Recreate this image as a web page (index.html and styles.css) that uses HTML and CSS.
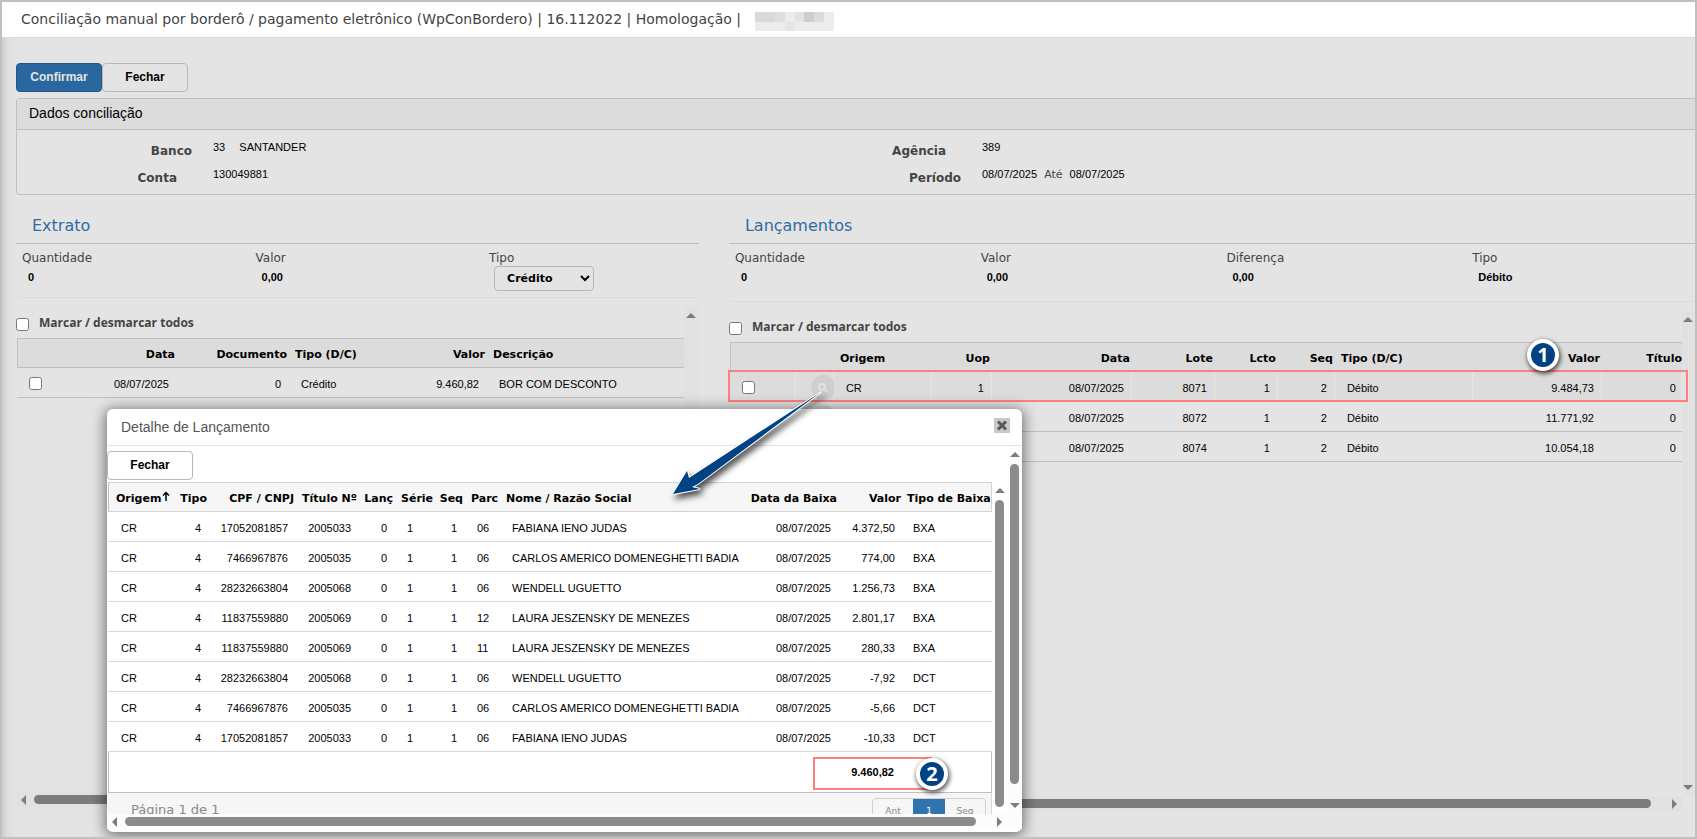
FILE: index.html
```html
<!DOCTYPE html>
<html lang="pt-BR">
<head>
  <meta charset="UTF-8">
  <meta name="viewport" content="width=device-width, initial-scale=1.0">
  <title>Conciliação manual por borderô</title>
  <link rel="stylesheet" href="styles.css">
</head>
<body>
  <header class="topbar">
    <h1>Conciliação manual por borderô / pagamento eletrônico (WpConBordero) | 16.112022 | Homologação |</h1>
    <svg class="redacted" viewBox="0 0 8 2" preserveAspectRatio="none" shape-rendering="crispEdges" aria-hidden="true">
      <rect width="8" height="2" fill="#ececec"/>
      <rect width="2" height="1" fill="#d9d9d9"/><rect x="2" width="1" height="1" fill="#dbe0e4"/>
      <rect x="4" width="1" height="1" fill="#e3e3e3"/><rect x="5" width="1" height="1" fill="#cdcdcd"/>
      <rect x="6" width="1" height="1" fill="#dadbe0"/><rect x="3" y="1" width="1" height="1" fill="#e5e5e5"/>
    </svg>
  </header>

  <main class="page">
    <div class="actions">
      <button class="btn btn-primary" type="button">Confirmar</button>
      <button class="btn" type="button">Fechar</button>
    </div>

    <section class="panel">
      <h2 class="panel-title">Dados conciliação</h2>
      <div class="panel-body">
        <span class="lbl">Banco</span>
        <span class="val">33 <span class="name">SANTANDER</span></span>
        <span class="lbl lbl-wide">Agência</span>
        <span class="val">389</span>
        <span class="lbl lbl-wide">Conta</span>
        <span class="val">130049881</span>
        <span class="lbl">Período</span>
        <span class="val">08/07/2025 <span class="ate">Até</span> 08/07/2025</span>
      </div>
    </section>

    <div class="columns">
      <section class="extrato">
        <h2 class="section-title">Extrato</h2>
        <div class="summary">
          <div><span class="sum-label">Quantidade</span><b>0</b></div>
          <div><span class="sum-label">Valor</span><b>0,00</b></div>
          <div>
            <label class="sum-label" for="tipo">Tipo</label>
            <select id="tipo"><option>Crédito</option><option>Débito</option></select>
          </div>
        </div>
        <div class="list">
          <div class="list-content">
            <div class="check-all">
              <input type="checkbox" id="todosExtrato">
              <label for="todosExtrato">Marcar / desmarcar todos</label>
            </div>
            <table class="grid">
              <colgroup><col class="w45"><col class="w115"><col class="w112"><col class="w90"><col class="w108"><col></colgroup>
              <thead>
                <tr><th></th><th class="r">Data</th><th class="r">Documento</th><th>Tipo (D/C)</th><th class="r">Valor</th><th>Descrição</th></tr>
              </thead>
              <tbody>
                <tr><td><input type="checkbox" aria-label="Selecionar"></td><td class="r">08/07/2025</td><td class="r">0</td><td>Crédito</td><td class="r">9.460,82</td><td>BOR COM DESCONTO</td></tr>
              </tbody>
            </table>
          </div>
          <div class="vbar"><i class="up"></i></div>
          <div class="hbar"><i class="left"></i><span class="thumb"></span><i class="right"></i></div>
        </div>
      </section>

      <section class="lancamentos">
        <h2 class="section-title">Lançamentos</h2>
        <div class="summary">
          <div><span class="sum-label">Quantidade</span><b>0</b></div>
          <div><span class="sum-label">Valor</span><b>0,00</b></div>
          <div><span class="sum-label">Diferença</span><b>0,00</b></div>
          <div><span class="sum-label">Tipo</span><b>Débito</b></div>
        </div>
        <div class="list">
          <div class="list-content">
            <div class="check-all">
              <input type="checkbox" id="todosLanc">
              <label for="todosLanc">Marcar / desmarcar todos</label>
            </div>
            <table class="grid">
              <colgroup><col class="w66"><col class="w38"><col class="w98"><col class="w60"><col class="w140"><col class="w83"><col class="w63"><col class="w57"><col class="w138"><col><col class="w80"></colgroup>
              <thead>
                <tr><th></th><th></th><th>Origem</th><th class="r">Uop</th><th class="r">Data</th><th class="r">Lote</th><th class="r">Lcto</th><th class="r">Seq</th><th>Tipo (D/C)</th><th class="r">Valor</th><th class="r">Título</th></tr>
              </thead>
              <tbody>
                <tr class="hover"><td><input type="checkbox" aria-label="Selecionar"></td><td><button class="lupa" type="button" aria-label="Detalhe"><svg viewBox="0 0 10 10"><circle cx="4" cy="4" r="3"/><path d="M6.2 6.2 9 9"/></svg></button></td><td>CR</td><td class="r">1</td><td class="r">08/07/2025</td><td class="r">8071</td><td class="r">1</td><td class="r">2</td><td>Débito</td><td class="r">9.484,73</td><td class="r">0</td></tr>
                <tr><td><input type="checkbox" aria-label="Selecionar"></td><td><button class="lupa" type="button" aria-label="Detalhe"></button></td><td>CR</td><td class="r">1</td><td class="r">08/07/2025</td><td class="r">8072</td><td class="r">1</td><td class="r">2</td><td>Débito</td><td class="r">11.771,92</td><td class="r">0</td></tr>
                <tr><td><input type="checkbox" aria-label="Selecionar"></td><td><button class="lupa" type="button" aria-label="Detalhe"></button></td><td>CR</td><td class="r">1</td><td class="r">08/07/2025</td><td class="r">8074</td><td class="r">1</td><td class="r">2</td><td>Débito</td><td class="r">10.054,18</td><td class="r">0</td></tr>
              </tbody>
            </table>
            <div class="mark mark-row"></div>
            <div class="badge badge-1">1</div>
          </div>
          <div class="vbar"><i class="up"></i><i class="down"></i></div>
          <div class="hbar"><i class="left"></i><span class="thumb"></span><i class="right"></i></div>
        </div>
      </section>
    </div>
  </main>

  <section class="modal" role="dialog" aria-labelledby="modalTitle">
    <header class="modal-header">
      <h2 id="modalTitle">Detalhe de Lançamento</h2>
      <button class="close" type="button" aria-label="Fechar"><svg viewBox="0 0 16 15"><path d="M4 3.5 12 11.5M12 3.5 4 11.5"/></svg></button>
    </header>
    <div class="modal-body">
      <div class="modal-content">
        <button class="btn" type="button">Fechar</button>
        <div class="detail">
          <div>
            <table class="grid detail-grid">
              <colgroup><col class="w66"><col class="w34"><col class="w87"><col class="w63"><col class="w36"><col class="w42"><col class="w28"><col class="w35"><col><col class="w98"><col class="w64"><col class="w90"></colgroup>
              <thead>
                <tr><th>Origem<svg class="sort" viewBox="0 0 8 10"><path d="M4 10V1.500M1 4.500 4 1.500 7 4.500"/></svg></th><th class="r">Tipo</th><th class="r">CPF / CNPJ</th><th class="r">Título Nº</th><th class="r">Lanç</th><th>Série</th><th class="r">Seq</th><th>Parc</th><th>Nome / Razão Social</th><th class="r">Data da Baixa</th><th class="r">Valor</th><th>Tipo de Baixa</th></tr>
              </thead>
              <tbody>
                <tr><td>CR</td><td class="r">4</td><td class="r">17052081857</td><td class="r">2005033</td><td class="r">0</td><td>1</td><td class="r">1</td><td>06</td><td>FABIANA IENO JUDAS</td><td class="r">08/07/2025</td><td class="r">4.372,50</td><td>BXA</td></tr>
                <tr><td>CR</td><td class="r">4</td><td class="r">7466967876</td><td class="r">2005035</td><td class="r">0</td><td>1</td><td class="r">1</td><td>06</td><td>CARLOS AMERICO DOMENEGHETTI BADIA</td><td class="r">08/07/2025</td><td class="r">774,00</td><td>BXA</td></tr>
                <tr><td>CR</td><td class="r">4</td><td class="r">28232663804</td><td class="r">2005068</td><td class="r">0</td><td>1</td><td class="r">1</td><td>06</td><td>WENDELL UGUETTO</td><td class="r">08/07/2025</td><td class="r">1.256,73</td><td>BXA</td></tr>
                <tr><td>CR</td><td class="r">4</td><td class="r">11837559880</td><td class="r">2005069</td><td class="r">0</td><td>1</td><td class="r">1</td><td>12</td><td>LAURA JESZENSKY DE MENEZES</td><td class="r">08/07/2025</td><td class="r">2.801,17</td><td>BXA</td></tr>
                <tr><td>CR</td><td class="r">4</td><td class="r">11837559880</td><td class="r">2005069</td><td class="r">0</td><td>1</td><td class="r">1</td><td>11</td><td>LAURA JESZENSKY DE MENEZES</td><td class="r">08/07/2025</td><td class="r">280,33</td><td>BXA</td></tr>
                <tr><td>CR</td><td class="r">4</td><td class="r">28232663804</td><td class="r">2005068</td><td class="r">0</td><td>1</td><td class="r">1</td><td>06</td><td>WENDELL UGUETTO</td><td class="r">08/07/2025</td><td class="r">-7,92</td><td>DCT</td></tr>
                <tr><td>CR</td><td class="r">4</td><td class="r">7466967876</td><td class="r">2005035</td><td class="r">0</td><td>1</td><td class="r">1</td><td>06</td><td>CARLOS AMERICO DOMENEGHETTI BADIA</td><td class="r">08/07/2025</td><td class="r">-5,66</td><td>DCT</td></tr>
                <tr><td>CR</td><td class="r">4</td><td class="r">17052081857</td><td class="r">2005033</td><td class="r">0</td><td>1</td><td class="r">1</td><td>06</td><td>FABIANA IENO JUDAS</td><td class="r">08/07/2025</td><td class="r">-10,33</td><td>DCT</td></tr>
              </tbody>
            </table>
            <div class="total">
              <b>9.460,82</b>
              <div class="mark mark-total"></div>
              <div class="badge badge-2">2</div>
            </div>
            <div class="pager">
              <span>Página 1 de 1</span>
              <div class="pages"><a href="#">Ant</a><a href="#" class="on">1</a><a href="#">Seg</a></div>
            </div>
          </div>
          <div class="vbar"><i class="up"></i><span class="thumb"></span></div>
        </div>
      </div>
      <div class="vbar"><i class="up"></i><span class="thumb"></span><i class="down"></i></div>
    </div>
    <div class="hbar"><i class="left"></i><span class="thumb"></span><i class="right"></i></div>
    <!-- seta do lançamento até o detalhe -->
    <svg class="arrow" viewBox="0 0 170 120" aria-hidden="true">
      <path d="M7 104 21 81 23 88 155 2 32 94 26 97 34 99Z"/>
    </svg>
  </section>
</body>
</html>
```

FILE: styles.css
```css
* {
  box-sizing: border-box;
}
body {
  margin: 0;
  min-height: 100vh;
  border: 2px solid #c0c0c0;
  background: #e4e4e4;
  font-family: "Liberation Sans", Arial, sans-serif;
  font-size: 11px;
  color: #000;
  position: relative;
  overflow: hidden;
}
h1, h2 {
  margin: 0;
  font-weight: normal;
}

/* topo */
.topbar {
  height: 36px;
  display: flex;
  align-items: center;
  gap: 14px;
  padding: 0 0 1px 19px;
  background: #fff;
  border-bottom: 1px solid #d8d8d8;
}
.topbar h1 {
  font: 14px/34px "DejaVu Sans", Verdana, sans-serif;
  color: #444;
}
.redacted {
  width: 79px;
  height: 19px;
  margin-top: 4px;
}
.page {
  padding: 25px 0 0 14px;
  min-height: 799px;
  box-shadow: inset 11px 0 8px -8px #c8c8c8;
}

/* botões */
.actions {
  display: flex;
  height: 35px;
}
.btn {
  width: 86px;
  height: 29px;
  padding: 0 0 2px;
  border: 1px solid #b8b8b8;
  border-radius: 4px;
  background: transparent;
  font: bold 12px "Liberation Sans", Arial, sans-serif;
  color: #000;
}
.btn-primary {
  background: #2b679f;
  border-color: #1f5788;
  color: #e4e4e4;
}

/* dados conciliação */
.panel {
  border: 1px solid #c0c0c0;
  border-right: 0;
  border-radius: 4px 0 0 4px;
}
.panel-title {
  height: 31px;
  padding-left: 12px;
  line-height: 29px;
  font-size: 14px;
  background: #dcdcdc;
  border-bottom: 1px solid #c0c0c0;
}
.panel-body {
  display: grid;
  grid-template-columns: 196px 573fr 196px 713fr;
  grid-auto-rows: 27px;
  padding: 8px 0 2px;
}
.lbl {
  padding-right: 21px;
  text-align: right;
  font: bold 12px/27px "DejaVu Sans", Verdana, sans-serif;
  color: #444;
}
.lbl-wide {
  padding-right: 36px;
}
.val {
  line-height: 18px;
}
.val .name {
  margin-left: 11px;
}
.val .ate {
  margin: 0 4px;
  font-family: "DejaVu Sans", Verdana, sans-serif;
  color: #444;
}

/* extrato e lançamentos */
.columns {
  display: grid;
  grid-template-columns: 41fr 58fr;
  gap: 30px;
  padding-top: 12px;
  align-items: start;
}
.section-title {
  height: 37px;
  padding-left: 16px;
  font: 16px/37px "DejaVu Sans", Verdana, sans-serif;
  color: #2f6ca6;
  border-bottom: 1px solid #c0c0c0;
}
.summary {
  display: grid;
  grid-template-columns: repeat(3, 34.5%);
  height: 54px;
  padding: 5px 0 0 6px;
  border-bottom: 1px solid #dadada;
  border-radius: 0 0 4px 4px;
}
.lancamentos .summary {
  grid-template-columns: repeat(4, 25.6%);
  height: 58px;
}
.sum-label {
  display: block;
  font: 12px/18px "DejaVu Sans", Verdana, sans-serif;
  color: #444;
}
.summary b {
  display: block;
  padding-left: 6px;
  line-height: 20px;
}
.summary select {
  display: block;
  width: 100px;
  height: 25px;
  margin: -1px 0 0 5px;
  padding: 0 0 0 8px;
  border: 1px solid #b8b8b8;
  border-radius: 4px;
  background: #e4e4e4;
  font: bold 11px "DejaVu Sans", Verdana, sans-serif;
  color: #000;
}
.list {
  display: grid;
  grid-template-columns: 1fr 15px;
  grid-template-rows: 1fr 15px;
  height: 500px;
  margin-top: 9px;
}
.lancamentos .list {
  grid-template-columns: 1fr 13px;
}
.list-content {
  position: relative;
  min-width: 0;
  padding-left: 1px;
}
.check-all {
  display: flex;
  align-items: center;
  gap: 10px;
  height: 31px;
  margin-left: -1px;
  font: bold 12px "Open Sans", "Trebuchet MS", sans-serif;
  color: #444;
}
.check-all input {
  margin: 4px 0 0;
}

/* tabelas */
.grid {
  width: 100%;
  table-layout: fixed;
  border-collapse: separate;
  border-spacing: 0;
}
.grid th {
  height: 30px;
  padding: 2px 2px 0 6px;
  background: #dcdcdc;
  border-top: 1px solid #c0c0c0;
  border-bottom: 1px solid #c0c0c0;
  font: bold 11px "DejaVu Sans", Verdana, sans-serif;
  text-align: left;
  white-space: nowrap;
}
.grid th:first-child {
  border-left: 1px solid #c0c0c0;
}
.grid td {
  height: 30px;
  padding: 2px 8px 0 12px;
  border-bottom: 1px solid #c0c0c0;
  white-space: nowrap;
}
.grid .r {
  text-align: right;
  padding-left: 0;
}
.grid th.r:last-child {
  padding-right: 0;
}
.grid td.r:last-child {
  padding-right: 6px;
}
.grid td input {
  display: block;
  margin: 0;
}
.grid .hover td {
  background: #dcdcdc;
  box-shadow: inset -1px 0 #e6e6e6;
}
.lupa {
  display: block;
  width: 25px;
  height: 25px;
  padding: 0;
  margin-left: 3px;
  border: 0;
  border-radius: 50%;
  background: #cfcfcf;
}
.lupa svg {
  display: block;
  width: 10px;
  margin: 0 auto;
  fill: none;
  stroke: #e2e2e2;
  stroke-width: 2;
}
.w28 { width: 28px; }
.w34 { width: 34px; }
.w35 { width: 35px; }
.w36 { width: 36px; }
.w38 { width: 38px; }
.w42 { width: 42px; }
.w45 { width: 45px; }
.w57 { width: 57px; }
.w60 { width: 60px; }
.w63 { width: 63px; }
.w64 { width: 64px; }
.w66 { width: 66px; }
.w80 { width: 80px; }
.w83 { width: 83px; }
.w87 { width: 87px; }
.w90 { width: 90px; }
.w98 { width: 98px; }
.w108 { width: 108px; }
.w112 { width: 112px; }
.w115 { width: 115px; }
.w138 { width: 138px; }
.w140 { width: 140px; }

/* barras de rolagem */
.vbar, .hbar {
  display: flex;
  align-items: center;
  justify-content: space-between;
  background: #e1e1e1;
}
.vbar {
  flex-direction: column;
  padding: 6px 0;
}
.hbar {
  height: 15px;
  padding: 0 5px;
}
.thumb {
  background: #7c7c7c;
  border-radius: 5px;
}
.hbar .thumb {
  flex: 1;
  height: 9px;
  margin: 0 21px 0 8px;
}
.vbar .thumb {
  flex: 1;
  width: 9px;
  margin: 7px 0 0;
}
.up, .down, .left, .right {
  border: 5px solid transparent;
}
.up {
  border-top: 0;
  border-bottom-color: #7c7c7c;
}
.down {
  border-bottom: 0;
  border-top-color: #7c7c7c;
}
.left {
  border-left: 0;
  border-right-color: #7c7c7c;
}
.right {
  border-right: 0;
  border-left-color: #7c7c7c;
}

/* marcações */
.mark {
  position: absolute;
  border: 2px solid #fd8080;
}
.mark-row {
  top: 59px;
  left: -1px;
  right: -6px;
  height: 32px;
  z-index: 1;
}
.mark-total {
  top: 5px;
  right: 59px;
  width: 119px;
  height: 33px;
}
.badge {
  position: absolute;
  width: 32px;
  height: 32px;
  border: 4px solid #fff;
  border-radius: 50%;
  background: #004282;
  box-shadow: 1px 2px 4px 1px rgba(0, 0, 0, 0.6);
  color: #fff;
  font: bold 20px/24px "Open Sans", sans-serif;
  text-align: center;
  z-index: 2;
}
.badge-1 {
  top: 28px;
  right: 123px;
}
.badge-2 {
  top: 6px;
  right: 43px;
}
.arrow {
  position: absolute;
  top: -19px;
  left: 559px;
  width: 170px;
  height: 120px;
  overflow: visible;
  fill: #004282;
  stroke: #fff;
  stroke-width: 2;
  paint-order: stroke;
  filter: drop-shadow(3px 4px 3px rgba(0, 0, 0, 0.7));
}

/* detalhe de lançamento */
.modal {
  position: absolute;
  top: 407px;
  left: 105px;
  width: 915px;
  height: 423px;
  background: #fff;
  border-radius: 6px;
  box-shadow: 0 2px 14px 2px rgba(0, 0, 0, 0.5);
  z-index: 3;
}
.modal-header {
  display: flex;
  justify-content: space-between;
  height: 37px;
  padding: 9px 12px 0 14px;
  border-bottom: 1px solid #e4e4e4;
}
.modal-header h2 {
  font-size: 14px;
  line-height: 19px;
  color: #555;
}
.close {
  width: 16px;
  height: 15px;
  padding: 0;
  border: 0;
  background: #c8c8c8;
}
.close svg {
  display: block;
  fill: none;
  stroke: #58595b;
  stroke-width: 3;
}
.modal-body {
  display: grid;
  grid-template-columns: 1fr 15px;
  height: 368px;
  overflow: hidden;
}
.modal-content {
  padding-top: 5px;
  min-width: 0;
}
.detail {
  display: grid;
  grid-template-columns: 1fr 15px;
  padding-left: 1px;
  margin-top: 2px;
}
.modal .vbar, .modal .hbar {
  background: #fcfcfc;
}
.modal .thumb {
  background: #8b8b8b;
}
.modal-body > .vbar {
  height: 368px;
}
.modal-body > .vbar .thumb {
  margin-bottom: 19px;
}
.detail > .vbar {
  height: 325px;
  padding-bottom: 0;
  background: #fff;
}
.modal > .hbar {
  padding-right: 20px;
}
.detail-grid th {
  padding-left: 7px;
  padding-right: 1px;
  background: #f6f6f6;
  border-color: #d4d4d4;
}
.detail-grid td {
  padding-left: 13px;
  padding-right: 7px;
  border-color: #d8d8d8;
}
.detail-grid th:last-child {
  padding-left: 5px;
  border-right: 1px solid #d4d4d4;
}
.detail-grid td:last-child {
  padding-left: 11px;
}
.sort {
  width: 8px;
  height: 10px;
  margin: 0 0 1px 1px;
  fill: none;
  stroke: #000;
  stroke-width: 1.5;
}
.total {
  position: relative;
  height: 41px;
  padding-right: 97px;
  line-height: 41px;
  text-align: right;
  border: 1px solid #c0c0c0;
  border-top: 0;
}
.pager {
  display: flex;
  justify-content: space-between;
  height: 40px;
  padding: 5px 5px 0 23px;
  background: #f6f6f6;
  border-right: 1px solid #d8d8d8;
  font: 13px/24px "DejaVu Sans", Verdana, sans-serif;
  color: #888;
}
.pages {
  display: flex;
  width: 114px;
  height: 30px;
  border: 1px solid #d0d0d0;
  border-radius: 4px;
  font-size: 9px;
  text-align: center;
}
.pages a {
  flex: 1;
  color: #888;
  text-decoration: none;
}
.pages .on {
  flex: 0 0 32px;
  background: #3173b1;
  color: #fff;
}
```
